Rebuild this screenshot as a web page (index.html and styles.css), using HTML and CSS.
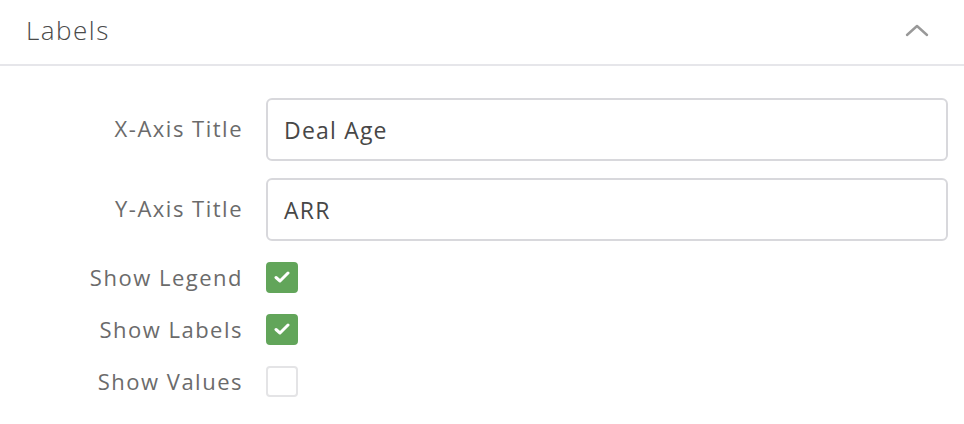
FILE: index.html
```html
<!DOCTYPE html>
<html>
<head>
<meta charset="utf-8">
<link rel="stylesheet" href="styles.css">
</head>
<body>
<section class="panel">
  <header class="panel-head">
    <h2 class="panel-title">Labels</h2>
    <svg class="chevron" width="26" height="16" viewBox="0 0 26 16"><path d="M3 13 L13 4 L23 13" fill="none" stroke="#999" stroke-width="2.4" stroke-linecap="round" stroke-linejoin="round"/></svg>
  </header>
  <div class="panel-body">
    <div class="row row-input">
      <label class="lbl">X-Axis Title</label>
      <div class="field">Deal Age</div>
    </div>
    <div class="row row-input">
      <label class="lbl">Y-Axis Title</label>
      <div class="field">ARR</div>
    </div>
    <div class="row row-check first-check">
      <label class="lbl">Show Legend</label>
      <span class="box checked"><svg width="16" height="12" viewBox="0 0 16 12"><path d="M2 6.5 L6 10 L14 2" fill="none" stroke="#fff" stroke-width="3" stroke-linecap="round" stroke-linejoin="round"/></svg></span>
    </div>
    <div class="row row-check">
      <label class="lbl">Show Labels</label>
      <span class="box checked"><svg width="16" height="12" viewBox="0 0 16 12"><path d="M2 6.5 L6 10 L14 2" fill="none" stroke="#fff" stroke-width="3" stroke-linecap="round" stroke-linejoin="round"/></svg></span>
    </div>
    <div class="row row-check">
      <label class="lbl">Show Values</label>
      <span class="box"></span>
    </div>
  </div>
</section>
</body>
</html>
```
FILE: styles.css
```css
html, body {
  margin: 0;
  padding: 0;
  background: #fff;
  font-family: "Open Sans", Lato, "Liberation Sans", sans-serif;
}
.panel {
  width: 964px;
}
.panel-head {
  border-bottom: 2px solid #e6e6ea;
  display: flex;
  align-items: center;
  justify-content: space-between;
  padding: 0 34px 0 26px;
  box-sizing: border-box;
  height: 66px;
}
.panel-title {
  margin: 0;
  font-size: 26px;
  font-weight: 300;
  color: #4a4a4a;
  letter-spacing: 1.5px;
  position: relative;
  top: -2px;
}
.chevron {
  position: relative;
  top: -2px;
}
.panel-body {
  padding: 32px 16px 0 0;
}
.row {
  display: flex;
  align-items: center;
}
.lbl {
  text-align: right;
  padding-right: 23px;
  box-sizing: border-box;
  font-size: 22px;
  letter-spacing: 1.5px;
  color: #6b6b6b;
  flex: none;
}
.row-input {
  height: 63px;
  margin-bottom: 17px;
}
.row-input .lbl {
  align-self: flex-start;
  padding-top: 15px;
  width: 266px;
}
.field {
  flex: 1;
  height: 63px;
  box-sizing: border-box;
  border: 2px solid #d8d8dc;
  border-radius: 6px;
  display: flex;
  align-items: center;
  padding-left: 16px;
  font-size: 23px;
  letter-spacing: 1.2px;
  color: #474747;
}
.row-check {
  height: 52px;
}
.first-check {
  margin-top: -7px;
}
.row-check .lbl {
  width: 266px;
}
.box {
  width: 32px;
  height: 31px;
  box-sizing: border-box;
  border-radius: 4px;
  border: 2px solid #e4e4e6;
  display: flex;
  align-items: center;
  justify-content: center;
}
.box.checked {
  background: #62a55a;
  border-color: #62a55a;
}
```
